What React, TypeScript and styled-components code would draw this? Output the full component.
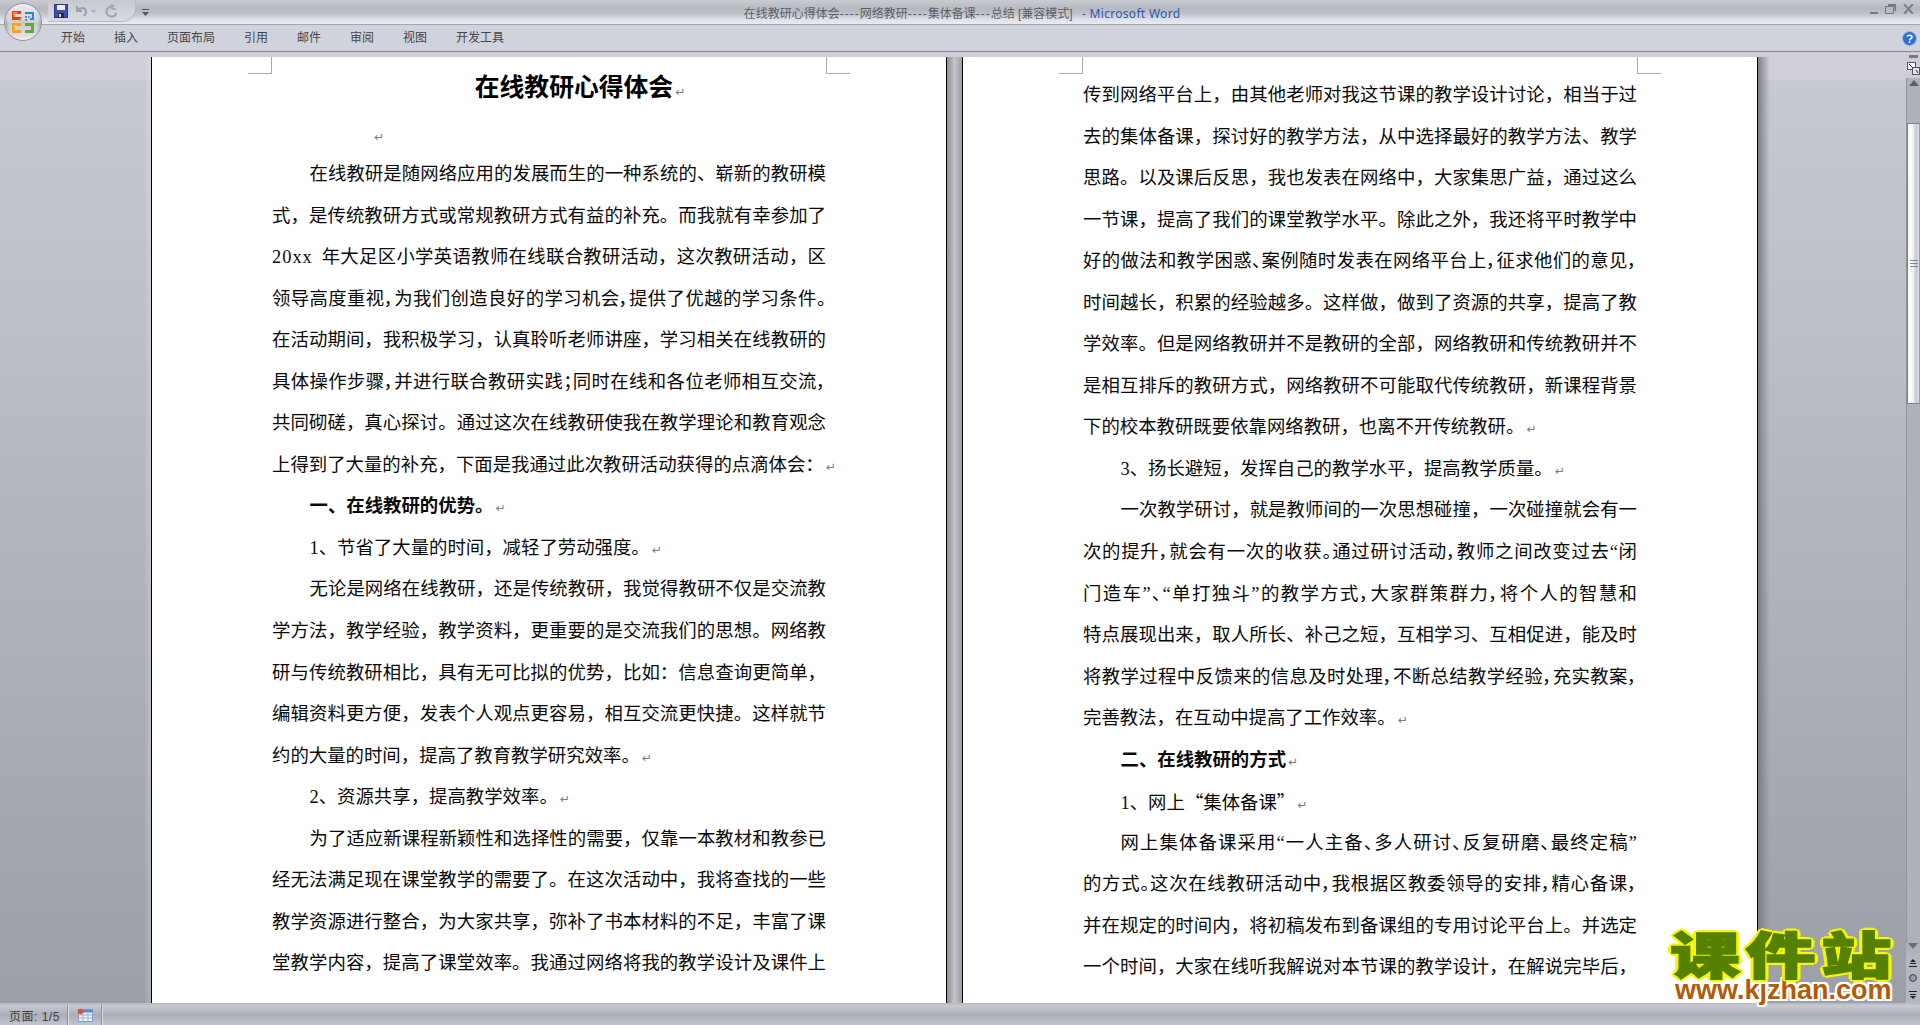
import React from 'react';
import styled, { createGlobalStyle } from 'styled-components';

const GlobalStyle = createGlobalStyle`
  html, body {
    margin: 0;
    padding: 0;
    height: 100%;
    overflow: hidden;
  }
  #root {
    height: 100%;
  }
`;

const UI_FONT = '"Liberation Sans", "Noto Sans CJK SC", sans-serif';
const DOC_FONT = '"Liberation Serif", "Noto Sans CJK SC", serif';

const Window = styled.div`
  position: relative;
  display: flex;
  flex-direction: column;
  width: 1920px;
  height: 1025px;
  overflow: hidden;
  font-family: ${UI_FONT};
  background: #c8cad2;
`;

/* ---------- title bar ---------- */

const TitleBar = styled.div`
  flex: none;
  display: flex;
  align-items: center;
  height: 24px;
  border-bottom: 1px solid #a6a8af;
  background: linear-gradient(180deg, #c8cad0 0%, #b6b9c1 36%, #bcc0c8 55%, #dde0e8 80%, #e9ebf2 100%);
`;

const Qat = styled.div`
  flex: none;
  display: flex;
  align-items: center;
  align-self: flex-start;
  gap: 6px;
  height: 22px;
  width: 88px;
  margin-left: 48px;
  padding-left: 6px;
  box-sizing: border-box;
  border: 1px solid #b8bbc3;
  border-top: none;
  border-left: none;
  border-radius: 0 0 14px 0;
  background: linear-gradient(180deg, #c6c9d0, #d8dbe3);
`;

const QatCaret = styled.svg`
  flex: none;
  margin-left: 6px;
`;

const WindowTitle = styled.div`
  position: absolute;
  left: 0;
  right: 0;
  top: 6px;
  padding-left: 4px;
  text-align: center;
  font-size: 12px;
  line-height: 15px;
  color: #5d5f64;
`;

const Dashes = styled.span`
  letter-spacing: 1px;
`;

const AppName = styled.span`
  margin-left: 6px;
  color: #2a5aa8;
  font-family: "Noto Sans", sans-serif;
  letter-spacing: 0.3px;
`;

const WindowButtons = styled.div`
  margin-left: auto;
  display: flex;
  align-items: center;
  gap: 7px;
  padding: 0 6px 6px 0;
  color: #6f7278;
`;

/* ---------- ribbon ---------- */

const Ribbon = styled.div`
  flex: none;
  display: flex;
  align-items: center;
  height: 27px;
  padding: 0 3px 0 61px;
  gap: 29px;
  box-sizing: border-box;
  border-bottom: 1px solid #85878c;
  background: #d0d3dc;
`;

const Tab = styled.div`
  font-size: 12px;
  line-height: 16px;
  color: #44464b;
  margin-top: -1px;
`;

const HelpIcon = styled.svg`
  margin-left: auto;
`;

const OfficeOrb = styled.svg`
  position: absolute;
  left: 4px;
  top: 3px;
`;

/* ---------- workspace ---------- */

const Workspace = styled.div`
  flex: 1;
  min-height: 0;
  display: flex;
  background: linear-gradient(180deg, #d0ced9 0, #d0ced9 28px, #c8cad2 28px, #9c9fa7 100%);
`;

const PageArea = styled.div`
  flex: 1;
  min-width: 0;
  display: flex;
  align-items: stretch;
  padding-top: 5px;
  overflow: hidden;
`;

const SideSpace = styled.div`
  flex: none;
  width: 145px;
`;

const Shade = styled.div<{ $width: number; $shade: string }>`
  flex: none;
  width: ${(p) => p.$width}px;
  background: ${(p) => p.$shade};
`;

const Page = styled.div`
  position: relative;
  flex: none;
  width: 794px;
  box-sizing: content-box;
  border-left: 1px solid #000;
  border-right: 1px solid #000;
  background: #fff;
  overflow: hidden;
`;

const PageBody = styled.div<{ $top: number }>`
  padding: ${(p) => p.$top}px 120px 0;
  font-family: ${DOC_FONT};
  color: #0a0a0a;
`;

const CornerMark = styled.div<{ $side: 'left' | 'right' }>`
  position: absolute;
  top: 0;
  width: 23px;
  height: 16px;
  border-bottom: 1px solid #a9a9a9;
  ${(p) =>
    p.$side === 'left'
      ? 'left: 96px; border-right: 1px solid #a9a9a9;'
      : 'right: 96px; border-left: 1px solid #a9a9a9;'}
`;

const DocTitle = styled.div`
  height: 62px;
  line-height: 62px;
  padding-left: 62px;
  text-align: center;
  font-size: 24.8px;
  font-weight: bold;
  color: #000;
`;

const BlankLine = styled.div`
  height: 35px;
  line-height: 34px;
  padding-left: 100px;
`;

const Line = styled.div<{ $indent?: boolean; $tight?: boolean; $end?: boolean; $bold?: boolean; $cjk?: boolean }>`
  height: 41.55px;
  line-height: 41.55px;
  font-size: 18.4px;
  white-space: nowrap;
  text-indent: ${(p) => (p.$indent ? '37.5px' : '0')};
  text-align: ${(p) => (p.$end ? 'left' : 'justify')};
  text-align-last: ${(p) => (p.$end ? 'left' : 'justify')};
  font-weight: ${(p) => (p.$bold ? 'bold' : 'normal')};
  ${(p) => (p.$tight ? 'font-feature-settings: "palt";' : '')}
  ${(p) => (p.$cjk ? 'font-family: "Noto Sans CJK SC", sans-serif;' : '')}
`;

const Prefix = styled.span<{ $wide?: boolean }>`
  font-family: ${DOC_FONT};
  ${(p) => (p.$wide ? 'letter-spacing: 1px; padding-right: 4px;' : '')}
`;

const ReturnMark = styled.span`
  margin-left: 2px;
  font-family: "DejaVu Sans", sans-serif;
  font-size: 12px;
  font-weight: normal;
  color: #7c7c7c;
`;

/* ---------- scroll bar ---------- */

const ScrollBar = styled.div`
  flex: none;
  width: 14px;
  display: flex;
  flex-direction: column;
  align-items: center;
  background: #aeb1b9;
  border-left: 1px solid #93959c;
  box-sizing: border-box;
`;

const ScrollTop = styled.div`
  align-self: stretch;
  height: 26px;
  margin-left: -1px;
  display: flex;
  flex-direction: column;
  align-items: center;
  background: #cfced8;
`;

const RulerDash = styled.div`
  width: 9px;
  height: 3px;
  margin-top: 3px;
  background: #77797f;
`;

const RulerButton = styled.svg`
  margin-top: 4px;
`;

const ScrollArrow = styled.svg<{ $top?: number }>`
  flex: none;
  margin-top: ${(p) => p.$top ?? 0}px;
`;

const Thumb = styled.div`
  flex: none;
  align-self: stretch;
  height: 279px;
  margin-top: 37px;
  display: flex;
  align-items: center;
  justify-content: center;
  border: 1px solid #7d8087;
  border-right-color: #9a9ca3;
  background: linear-gradient(90deg, #fdfbec 0%, #ffffff 30%, #e9eaef 50%, #c5c8d2 75%, #dfe1e7 100%);
`;

const Grip = styled.div`
  width: 8px;
  height: 7px;
  background: repeating-linear-gradient(180deg, #85878d 0, #85878d 1px, transparent 1px, transparent 3px);
`;

const BrowseGroup = styled.div`
  margin-top: auto;
  align-self: stretch;
  margin-left: -1px;
  height: 60px;
  display: flex;
  flex-direction: column;
  align-items: center;
  background: linear-gradient(180deg, #aeb1b9 0, #aeb1b9 10px, #b4b7bf 10px);
`;

const BrowseIcon = styled.svg<{ $top: number }>`
  margin-top: ${(p) => p.$top}px;
`;

/* ---------- status bar ---------- */

const StatusBar = styled.div`
  flex: none;
  display: flex;
  align-items: stretch;
  height: 22px;
  box-sizing: border-box;
  border-top: 2px solid #bcbec4;
  background: linear-gradient(180deg, #c9cbd2 0%, #abadb5 50%, #c4c6cf 100%);
`;

const StatusCell = styled.div<{ $width: number }>`
  flex: none;
  display: flex;
  align-items: center;
  width: ${(p) => p.$width}px;
  box-sizing: border-box;
  padding-left: 9px;
  font-size: 12px;
  letter-spacing: 0.5px;
  color: #3c3e44;
  border-right: 1px solid #8f9198;
  box-shadow: 1px 0 0 #dadce2;
`;

/* ---------- watermark ---------- */

const Watermark = styled.div`
  position: absolute;
  left: 1670px;
  top: 926px;
  width: 240px;
`;

const WatermarkTitle = styled.div`
  height: 52px;
  font-family: "Noto Sans CJK SC", sans-serif;
  font-size: 50px;
  line-height: 52px;
  font-weight: 900;
  letter-spacing: 4px;
  white-space: nowrap;
  color: #558000;
  transform: scaleX(1.4);
  transform-origin: left center;
  -webkit-text-stroke: 1.5px #558000;
  text-shadow: 3px 0 #f6f600, -3px 0 #f6f600, 0 3px #f6f600, 0 -3px #f6f600, 2px 2px #f6f600, -2px 2px #f6f600,
    2px -2px #f6f600, -2px -2px #f6f600;
`;

const WatermarkUrl = styled.div`
  margin-left: 5px;
  font-family: "Liberation Sans", sans-serif;
  font-size: 27px;
  line-height: 24px;
  font-weight: bold;
  white-space: nowrap;
  color: #b15c08;
  text-shadow: 2px 0 #fff, -2px 0 #fff, 0 2px #fff, 0 -2px #fff, 2px 2px #fff, -2px 2px #fff, 2px -2px #fff,
    -2px -2px #fff;
`;

/* ---------- data ---------- */

interface DocLine {
  text: string;
  prefix?: string;
  wide?: boolean;
  indent?: boolean;
  tight?: boolean;
  end?: boolean;
  bold?: boolean;
  cjk?: boolean;
}

const TABS = ['开始', '插入', '页面布局', '引用', '邮件', '审阅', '视图', '开发工具'];

const LEFT_LINES: DocLine[] = [
  { text: '在线教研是随网络应用的发展而生的一种系统的、崭新的教研模', indent: true },
  { text: '式，是传统教研方式或常规教研方式有益的补充。而我就有幸参加了' },
  { prefix: '20xx', wide: true, text: ' 年大足区小学英语教师在线联合教研活动，这次教研活动，区' },
  { text: '领导高度重视，为我们创造良好的学习机会，提供了优越的学习条件。', tight: true },
  { text: '在活动期间，我积极学习，认真聆听老师讲座，学习相关在线教研的' },
  { text: '具体操作步骤，并进行联合教研实践；同时在线和各位老师相互交流，', tight: true },
  { text: '共同砌磋，真心探讨。通过这次在线教研使我在教学理论和教育观念' },
  { text: '上得到了大量的补充，下面是我通过此次教研活动获得的点滴体会：', end: true },
  { text: '一、在线教研的优势。', indent: true, end: true, bold: true },
  { text: '1、节省了大量的时间，减轻了劳动强度。', indent: true, end: true },
  { text: '无论是网络在线教研，还是传统教研，我觉得教研不仅是交流教', indent: true },
  { text: '学方法，教学经验，教学资料，更重要的是交流我们的思想。网络教' },
  { text: '研与传统教研相比，具有无可比拟的优势，比如：信息查询更简单，' },
  { text: '编辑资料更方便，发表个人观点更容易，相互交流更快捷。这样就节' },
  { text: '约的大量的时间，提高了教育教学研究效率。', end: true },
  { text: '2、资源共享，提高教学效率。', indent: true, end: true },
  { text: '为了适应新课程新颖性和选择性的需要，仅靠一本教材和教参已', indent: true },
  { text: '经无法满足现在课堂教学的需要了。在这次活动中，我将查找的一些' },
  { text: '教学资源进行整合，为大家共享，弥补了书本材料的不足，丰富了课' },
  { text: '堂教学内容，提高了课堂效率。我通过网络将我的教学设计及课件上' },
];

const RIGHT_LINES: DocLine[] = [
  { text: '传到网络平台上，由其他老师对我这节课的教学设计讨论，相当于过' },
  { text: '去的集体备课，探讨好的教学方法，从中选择最好的教学方法、教学' },
  { text: '思路。以及课后反思，我也发表在网络中，大家集思广益，通过这么' },
  { text: '一节课，提高了我们的课堂教学水平。除此之外，我还将平时教学中' },
  { text: '好的做法和教学困惑、案例随时发表在网络平台上，征求他们的意见，', tight: true },
  { text: '时间越长，积累的经验越多。这样做，做到了资源的共享，提高了教' },
  { text: '学效率。但是网络教研并不是教研的全部，网络教研和传统教研并不' },
  { text: '是相互排斥的教研方式，网络教研不可能取代传统教研，新课程背景' },
  { text: '下的校本教研既要依靠网络教研，也离不开传统教研。', end: true },
  { text: '3、扬长避短，发挥自己的教学水平，提高教学质量。', indent: true, end: true },
  { text: '一次教学研讨，就是教师间的一次思想碰撞，一次碰撞就会有一', indent: true },
  { text: '次的提升，就会有一次的收获。通过研讨活动，教师之间改变过去“闭', tight: true },
  { text: '门造车”、“单打独斗”的教学方式，大家群策群力，将个人的智慧和', tight: true },
  { text: '特点展现出来，取人所长、补己之短，互相学习、互相促进，能及时' },
  { text: '将教学过程中反馈来的信息及时处理，不断总结教学经验，充实教案，', tight: true },
  { text: '完善教法，在互动中提高了工作效率。', end: true },
  { text: '二、在线教研的方式', indent: true, end: true, bold: true },
  { prefix: '1', text: '、网上“集体备课”', indent: true, end: true, cjk: true },
  { text: '网上集体备课采用“一人主备、多人研讨、反复研磨、最终定稿”', indent: true, tight: true },
  { text: '的方式。这次在线教研活动中，我根据区教委领导的安排，精心备课，', tight: true },
  { text: '并在规定的时间内，将初稿发布到备课组的专用讨论平台上。并选定' },
  { text: '一个时间，大家在线听我解说对本节课的教学设计，在解说完毕后，' },
];

const renderLines = (lines: DocLine[]) =>
  lines.map((line) => (
    <Line
      key={line.text}
      $indent={line.indent}
      $tight={line.tight}
      $end={line.end}
      $bold={line.bold}
      $cjk={line.cjk}
    >
      {line.prefix && <Prefix $wide={line.wide}>{line.prefix}</Prefix>}
      {line.text}
      {line.end && <ReturnMark>↵</ReturnMark>}
    </Line>
  ));

/* ---------- drawings ---------- */

const OfficeLogo = () => (
  <OfficeOrb width="38" height="38" viewBox="0 0 38 38">
    <defs>
      <linearGradient id="orb" x1="0" y1="0" x2="0" y2="1">
        <stop offset="0" stopColor="#f4f5f7" />
        <stop offset="0.45" stopColor="#c4c7cd" />
        <stop offset="0.55" stopColor="#aeb1b8" />
        <stop offset="1" stopColor="#f7f7f7" />
      </linearGradient>
    </defs>
    <circle cx="19" cy="19" r="18.5" fill="url(#orb)" stroke="#8f9299" />
    <circle cx="19" cy="19" r="15.5" fill="#dfe1e6" opacity="0.55" />
    <path d="M8 8h9v3h-6v3h6v3H8z" fill="#d8441c" />
    <path d="M9 9h4v2h-2v3H9z" fill="#f08b3d" />
    <path d="M21 9h9v8h-4v-2h2v-4h-7z" fill="#3b7dc9" />
    <rect x="21" y="13" width="2" height="2" fill="#4a8ed6" />
    <rect x="21" y="16" width="2" height="2" fill="#4a8ed6" />
    <rect x="24" y="13" width="2" height="2" fill="#6aa5e0" />
    <path d="M8 20h9v3h-6v4h6v3H8z" fill="#f2a31c" />
    <rect x="10" y="22" width="3" height="2" fill="#f7d24a" />
    <path d="M21 20h9v10h-9v-3h6v-4h-6z" fill="#62a83a" />
    <rect x="18" y="18" width="2" height="2" fill="#e8c34a" />
    <rect x="15" y="16" width="2" height="2" fill="#7fb0dd" />
  </OfficeOrb>
);

const SaveIcon = () => (
  <svg width="14" height="14" viewBox="0 0 14 14">
    <rect x="0.5" y="0.5" width="13" height="13" fill="#3d4fb4" stroke="#2b3586" />
    <rect x="3" y="1" width="8" height="5" fill="#e8ecf6" />
    <rect x="4" y="9" width="6" height="5" fill="#2a2a2e" />
    <rect x="5" y="10" width="2" height="3" fill="#d8dbe2" />
  </svg>
);

const UndoIcon = () => (
  <svg width="24" height="14" viewBox="0 0 24 14" fill="none">
    <path d="M3 2v5h5" stroke="#9da0a8" strokeWidth="2" />
    <path d="M3.5 6.5C6 3 11 3 12 7c.4 2-1 4-2 5" stroke="#9da0a8" strokeWidth="2" />
    <path d="M17 6h5l-2.5 3z" fill="#a5a8b0" />
  </svg>
);

const RedoIcon = () => (
  <svg width="14" height="14" viewBox="0 0 14 14" fill="none">
    <path d="M10 2.5C6 1.5 2.5 4 2.5 7.5c0 3 2.5 5 5.5 5s4-2 4-4" stroke="#a2a5ad" strokeWidth="2.2" />
    <path d="M8 0v5h4" stroke="#a2a5ad" strokeWidth="1.5" />
  </svg>
);

const RulerIcon = () => (
  <RulerButton width="13" height="13" viewBox="0 0 13 13">
    <rect x="0.5" y="0.5" width="8" height="7" fill="#f2f3f7" stroke="#55575d" />
    <rect x="5.5" y="5.5" width="7" height="7" fill="#dfe2ea" stroke="#55575d" />
    <path d="M2 2l4 4M9 8l2 3" stroke="#33353a" />
  </RulerButton>
);

const HelpButton = () => (
  <HelpIcon width="15" height="15" viewBox="0 0 15 15">
    <circle cx="7.5" cy="7.5" r="7" fill="#2f6fd0" stroke="#9dbbe8" />
    <path d="M5 5.6C5.4 3.8 10 3.6 10 6c0 1.6-2.4 1.8-2.4 3.4" fill="none" stroke="#fff" strokeWidth="1.6" />
    <rect x="6.8" y="10.4" width="1.6" height="1.6" fill="#fff" />
  </HelpIcon>
);

const StatusIcon = () => (
  <svg width="16" height="14" viewBox="0 0 16 14">
    <rect x="1.5" y="1.5" width="14" height="12" fill="#eef2f9" stroke="#7e9cc4" />
    <rect x="2" y="2" width="13" height="2.5" fill="#5a86c4" />
    <path d="M2 7h13M2 10h13M6 5v8M11 5v8" stroke="#9ab3d4" />
    <circle cx="3.5" cy="3.5" r="2.8" fill="#d9503c" />
  </svg>
);

const App = () => {
  return (
    <Window>
      <GlobalStyle />
      <TitleBar>
        <Qat>
          <SaveIcon />
          <UndoIcon />
          <RedoIcon />
        </Qat>
        <QatCaret width="7" height="7" viewBox="0 0 7 7">
          <rect x="0" y="0" width="7" height="1" fill="#55575c" />
          <path d="M0 3h7L3.5 7z" fill="#55575c" />
        </QatCaret>
        <WindowTitle>
          在线教研心得体会<Dashes>----</Dashes>网络教研<Dashes>----</Dashes>集体备课<Dashes>---</Dashes>总结 [兼容模式]{' '}
          <AppName>- Microsoft Word</AppName>
        </WindowTitle>
        <WindowButtons>
          <svg width="8" height="10" viewBox="0 0 8 10">
            <rect x="0" y="8" width="8" height="2" fill="#75787e" />
          </svg>
          <svg width="11" height="10" viewBox="0 0 11 10" fill="none" stroke="#75787e">
            <rect x="0.5" y="2.5" width="8" height="7" />
            <path d="M3 1h7.5v6" strokeWidth="2" />
          </svg>
          <svg width="11" height="10" viewBox="0 0 11 10" fill="none" stroke="#7d8087" strokeWidth="2">
            <path d="M1 0l9 10M10 0L1 10" />
          </svg>
        </WindowButtons>
      </TitleBar>

      <Ribbon>
        {TABS.map((tab) => (
          <Tab key={tab}>{tab}</Tab>
        ))}
        <HelpButton />
      </Ribbon>
      <OfficeLogo />

      <Workspace>
        <PageArea>
          <SideSpace />
          <Shade $width={6} $shade="linear-gradient(90deg, rgba(255, 255, 255, 0.05), rgba(255, 255, 255, 0.2))" />
          <Page>
            <CornerMark $side="left" />
            <CornerMark $side="right" />
            <PageBody $top={0}>
              <DocTitle>
                在线教研心得体会
                <ReturnMark>↵</ReturnMark>
              </DocTitle>
              <BlankLine>
                <ReturnMark>↵</ReturnMark>
              </BlankLine>
              {renderLines(LEFT_LINES)}
            </PageBody>
          </Page>
          <Shade $width={15} $shade="linear-gradient(90deg, #8c8e94, #c3c5cb 50%, #9b9da3)" />
          <Page>
            <CornerMark $side="left" />
            <CornerMark $side="right" />
            <PageBody $top={18}>{renderLines(RIGHT_LINES)}</PageBody>
          </Page>
          <Shade $width={12} $shade="linear-gradient(90deg, #7d7f85, rgba(200, 202, 210, 0))" />
        </PageArea>
        <ScrollBar>
          <ScrollTop>
            <RulerDash />
            <RulerIcon />
          </ScrollTop>
          <ScrollArrow width="10" height="6" viewBox="0 0 10 6" $top={2}>
            <path d="M0 6h10L5 0z" fill="#5c5e64" />
          </ScrollArrow>
          <Thumb>
            <Grip />
          </Thumb>
          <BrowseGroup>
            <ScrollArrow width="10" height="6" viewBox="0 0 10 6">
              <path d="M0 0h10L5 6z" fill="#6b6d73" />
            </ScrollArrow>
            <BrowseIcon width="8" height="8" viewBox="0 0 8 8" $top={10}>
              <path d="M4 0l3 3H1zM1 4h6v1H1zM0 7h8v1H0z" fill="#222" />
            </BrowseIcon>
            <BrowseIcon width="8" height="8" viewBox="0 0 8 8" $top={7}>
              <circle cx="4" cy="4" r="3.4" fill="#9a9da4" stroke="#3b3d42" />
            </BrowseIcon>
            <BrowseIcon width="8" height="8" viewBox="0 0 8 8" $top={9}>
              <path d="M0 0h8v1H0zM1 3h6v1H1zM4 8L1 5h6z" fill="#222" />
            </BrowseIcon>
          </BrowseGroup>
        </ScrollBar>
      </Workspace>

      <StatusBar>
        <StatusCell $width={68}>页面: 1/5</StatusCell>
        <StatusCell $width={34}>
          <StatusIcon />
        </StatusCell>
      </StatusBar>

      <Watermark>
        <WatermarkTitle>课件站</WatermarkTitle>
        <WatermarkUrl>www.kjzhan.com</WatermarkUrl>
      </Watermark>
    </Window>
  );
};

export default App;
